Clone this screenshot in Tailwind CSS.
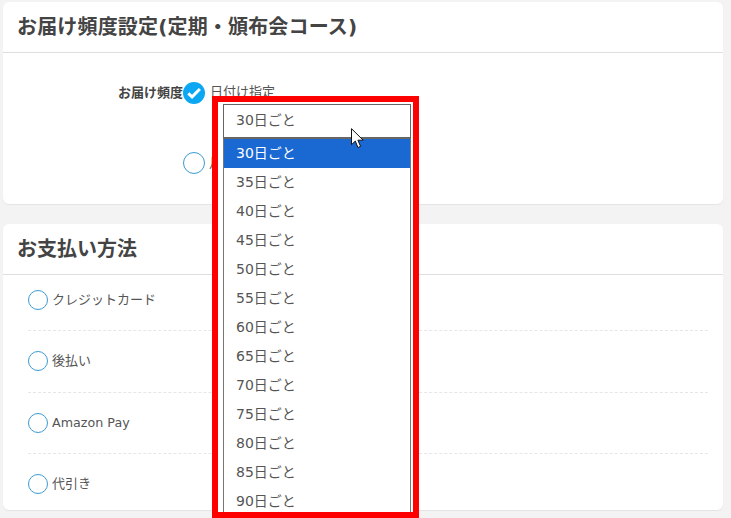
<!doctype html>
<html lang="ja">
<head>
    <meta charset="UTF-8">
    <meta name="viewport" content="width=device-width, initial-scale=1.0">
    <script src="https://cdn.jsdelivr.net/npm/@tailwindcss/browser@4"></script>
    <title>お届け頻度設定</title>
</head>
<body class="bg-[#f3f3f3] font-['DejaVu_Sans','Noto_Sans_CJK_JP',sans-serif] text-[#555]">

<div class="relative h-[518px] w-[731px] overflow-hidden">
    <div class="ml-[3px] w-[720px] pt-[2px]">
        <!-- Delivery frequency -->
        <section class="h-[202px] rounded-md bg-white shadow-[0_1px_1px_#e4e4e4]">
            <h2 class="flex h-[51px] items-center border-b border-[#dedede] pl-[14px] text-[20px] leading-none font-bold tracking-[0.17px] text-[#444]">お届け頻度設定(定期・頒布会コース)</h2>
            <div class="flex pt-[29px]">
                <div class="w-[180px] pt-[2px] text-right text-[13px] leading-[18px] font-bold text-[#444]">お届け頻度</div>
                <div class="flex flex-col gap-[48px]">
                    <div class="flex items-center gap-[5px]">
                        <svg class="h-[22px] w-[22px]" viewBox="0 0 22 22">
                            <circle cx="11" cy="11" r="11" fill="#0ca7f2"/>
                            <path d="M5.3 11.3l3.8 3.6 7.8-7.9" fill="none" stroke="#fff" stroke-width="3"/>
                        </svg>
                        <span class="pb-[2px] text-[13px]">日付け指定</span>
                    </div>
                    <div class="flex items-center gap-[4px]">
                        <span class="h-[22px] w-[22px] rounded-full border border-[#3d9bd3] bg-white"></span>
                        <span class="text-[13px]">月</span>
                    </div>
                </div>
            </div>
        </section>

        <!-- Payment method -->
        <section class="mt-[20px] h-[286px] rounded-md bg-white shadow-[0_1px_1px_#e4e4e4]">
            <h2 class="flex h-[51px] items-center border-b border-[#dedede] pl-[14px] text-[20px] leading-none font-bold text-[#444]">お支払い方法</h2>
            <div class="pr-[15px] pl-[25px]">
                <div class="flex h-[56px] items-start gap-[4px] border-b border-dashed border-[#e6e6e6] pt-[15px]">
                    <span class="h-[20px] w-[20px] rounded-full border border-[#3d9bd3]"></span>
                    <span class="text-[13px] leading-[20px]">クレジットカード</span>
                </div>
                <div class="flex h-[62px] items-start gap-[4px] border-b border-dashed border-[#e6e6e6] pt-[20px]">
                    <span class="h-[20px] w-[20px] rounded-full border border-[#3d9bd3]"></span>
                    <span class="text-[13px] leading-[20px]">後払い</span>
                </div>
                <div class="flex h-[61px] items-start gap-[4px] border-b border-dashed border-[#e6e6e6] pt-[20px]">
                    <span class="h-[20px] w-[20px] rounded-full border border-[#3d9bd3]"></span>
                    <span class="text-[12.7px] leading-[20px]">Amazon Pay</span>
                </div>
                <div class="flex items-start gap-[4px] pt-[20px]">
                    <span class="h-[20px] w-[20px] rounded-full border border-[#3d9bd3]"></span>
                    <span class="text-[13px] leading-[20px]">代引き</span>
                </div>
            </div>
        </section>
    </div>

    <!-- Highlighted select popup -->
    <div class="absolute top-[96px] left-[212px] h-[422px] w-[207px] overflow-hidden border-[6px] border-[#ff0000] bg-white pt-[2px] pl-[5px]">
        <div class="w-[188px] text-[14px]">
            <div class="flex h-[35px] items-center border border-b-2 border-[#666] pb-[1px] pl-[12px]">30日ごと</div>
            <div class="h-[375px] overflow-hidden border-x border-[#777]">
                <div class="flex h-[29px] items-center bg-[#1a68d2] pl-[12px] text-white">30日ごと</div>
                <div class="flex h-[29px] items-center pl-[12px]">35日ごと</div>
                <div class="flex h-[29px] items-center pl-[12px]">40日ごと</div>
                <div class="flex h-[29px] items-center pl-[12px]">45日ごと</div>
                <div class="flex h-[29px] items-center pl-[12px]">50日ごと</div>
                <div class="flex h-[29px] items-center pl-[12px]">55日ごと</div>
                <div class="flex h-[29px] items-center pl-[12px]">60日ごと</div>
                <div class="flex h-[29px] items-center pl-[12px]">65日ごと</div>
                <div class="flex h-[29px] items-center pl-[12px]">70日ごと</div>
                <div class="flex h-[29px] items-center pl-[12px]">75日ごと</div>
                <div class="flex h-[29px] items-center pl-[12px]">80日ごと</div>
                <div class="flex h-[29px] items-center pl-[12px]">85日ごと</div>
                <div class="flex h-[29px] items-center pl-[12px]">90日ごと</div>
            </div>
        </div>
    </div>

    <!-- Mouse cursor -->
    <svg class="absolute top-[128px] left-[351px] h-[21px] w-[13px]" viewBox="0 0 13 21">
        <path d="M.5.7v16l3.8-3.6 2.6 6.4 2.7-1.1-2.7-6.2h5.3z" fill="#fff" stroke="#111" stroke-width="1"/>
    </svg>
</div>

</body>
</html>
